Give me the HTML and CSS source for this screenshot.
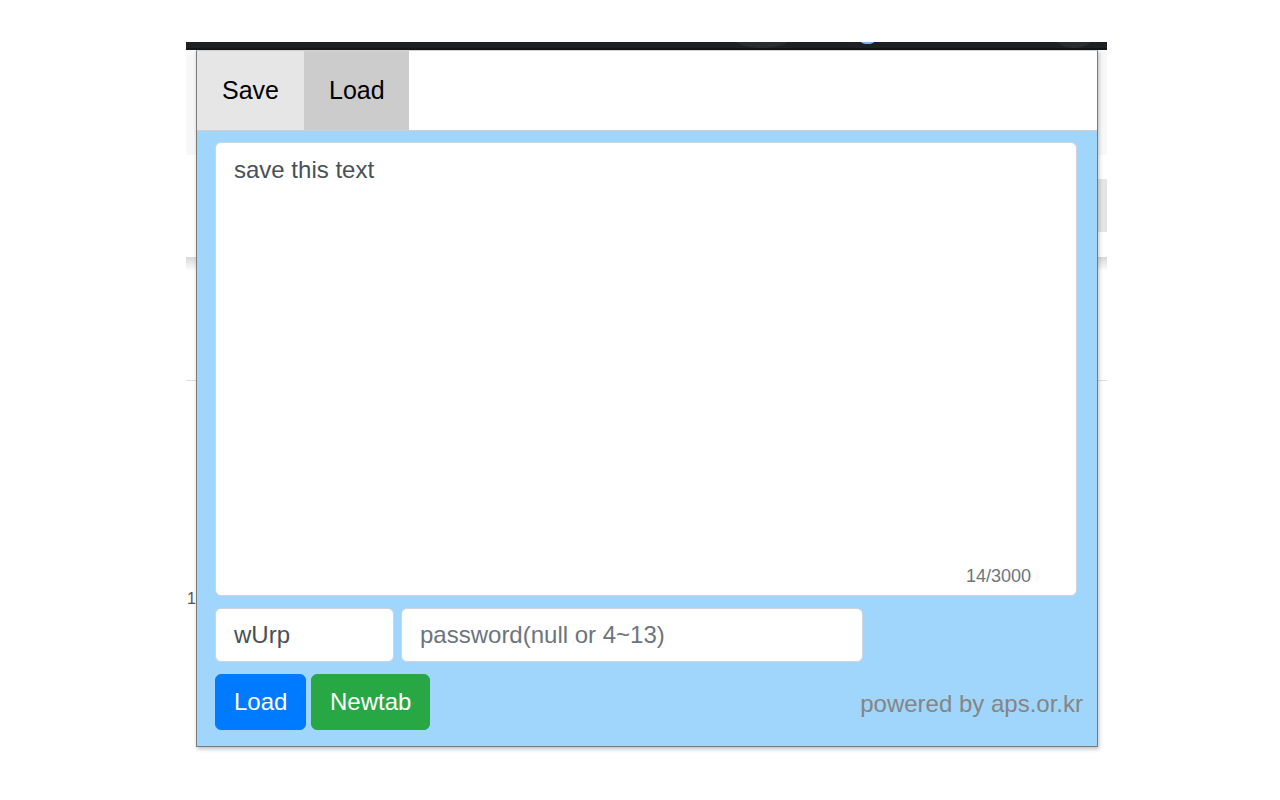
FILE: index.html
```html
<!DOCTYPE html>
<html lang="en">
<head>
<meta charset="utf-8">
<title>Save / Load</title>
<link rel="stylesheet" href="styles.css">
</head>
<body>
<div class="bg-window">
  <div class="bg-topbar">
    <span class="bg-arc bg-arc-a"></span>
    <span class="bg-dot"></span>
    <span class="bg-arc bg-arc-b"></span>
  </div>
  <div class="bg-header"></div>
  <div class="bg-toolbar">
    <span class="bg-toolbtn"></span>
  </div>
  <div class="bg-shadow"></div>
  <div class="bg-section"></div>
  <div class="bg-content"><span class="bg-num">1</span></div>
</div>

<div class="popup">
  <nav class="tabs">
    <div class="tab tab-save">Save</div>
    <div class="tab tab-load">Load</div>
  </nav>
  <main class="panel">
    <div class="editor">
      <textarea class="editor-text">save this text</textarea>
      <span class="counter">14/3000</span>
    </div>
    <div class="field-row">
      <input class="field field-key" type="text" value="wUrp">
      <input class="field field-pass" type="password" placeholder="password(null or 4~13)">
    </div>
    <div class="action-row">
      <div class="buttons">
        <button class="btn btn-load">Load</button>
        <button class="btn btn-newtab">Newtab</button>
      </div>
      <span class="powered">powered by aps.or.kr</span>
    </div>
  </main>
</div>
</body>
</html>
```

FILE: styles.css
```css
* {
  box-sizing: border-box;
}

html, body {
  margin: 0;
  padding: 0;
  background: #ffffff;
  font-family: "Liberation Sans", Arial, sans-serif;
}

body {
  width: 1280px;
  height: 800px;
  overflow: hidden;
  position: relative;
}

/* background browser window (free canvas) */
.bg-window {
  position: absolute;
  left: 186px;
  top: 42px;
  width: 921px;
  height: 760px;
  background: #ffffff;
  display: flex;
  flex-direction: column;
}

.bg-topbar {
  height: 8px;
  flex-shrink: 0;
  background: #1f2023;
  border-bottom: 2px solid #151618;
  position: relative;
  overflow: hidden;
}

.bg-arc {
  position: absolute;
  top: -14px;
  height: 20px;
  border-radius: 50%;
  background: #2b2c30;
}

.bg-arc-a {
  left: 548px;
  width: 56px;
}

.bg-arc-b {
  left: 870px;
  width: 36px;
}

.bg-dot {
  position: absolute;
  left: 674px;
  top: -3px;
  width: 15px;
  height: 5px;
  border-radius: 0 0 6px 6px;
  background: #7fb0f0;
}

.bg-header {
  height: 105px;
  flex-shrink: 0;
  background: #f7f8fa;
}

.bg-toolbar {
  height: 102px;
  flex-shrink: 0;
  padding-top: 24px;
  display: flex;
  justify-content: flex-end;
}

.bg-toolbtn {
  width: 14px;
  height: 53px;
  background: #e4e6e6;
  border-left: 3px solid #b8bcbf;
}

.bg-shadow {
  height: 14px;
  flex-shrink: 0;
  background: linear-gradient(#d8d8d8, #ffffff);
}

.bg-section {
  height: 110px;
  flex-shrink: 0;
  border-bottom: 1px solid #dedede;
}

.bg-content {
  padding-top: 209px;
}

.bg-num {
  font-size: 16px;
  color: #555;
  padding-left: 1px;
}

/* popup (overlays the browser window) */
.popup {
  position: absolute;
  left: 196px;
  top: 50px;
  width: 902px;
  height: 697px;
  background: #ffffff;
  border: 1px solid #7a7a7a;
  border-top-color: #cfcfcf;
  box-shadow: 1px 2px 4px rgba(0, 0, 0, 0.25);
  display: flex;
  flex-direction: column;
}

.tabs {
  display: flex;
  height: 80px;
  flex-shrink: 0;
  border-bottom: 1px solid #cfcfcf;
}

.tab {
  display: flex;
  align-items: center;
  padding: 0 25px;
  font-size: 25px;
  color: #000;
}

.tab-save {
  width: 107px;
  background: #e6e6e6;
}

.tab-load {
  width: 105px;
  background: #cccccc;
}

.panel {
  flex: 1;
  background: #a0d6fc;
  padding: 11px 14px 16px 18px;
  display: flex;
  flex-direction: column;
  gap: 12px;
}

.editor {
  position: relative;
  width: 862px;
  height: 454px;
  flex-shrink: 0;
}

.editor-text {
  display: block;
  width: 100%;
  height: 100%;
  margin: 0;
  resize: none;
  border: 1px solid #ced4da;
  border-radius: 6px;
  background: #ffffff;
  padding: 9px 18px;
  font-family: "Liberation Sans", Arial, sans-serif;
  font-size: 24px;
  line-height: 36px;
  color: #495057;
  outline: none;
}

.counter {
  position: absolute;
  right: 46px;
  bottom: 9px;
  font-size: 18px;
  color: #6c757d;
}

.field-row {
  display: flex;
  gap: 7px;
}

.field {
  height: 54px;
  margin: 0;
  border: 1px solid #ced4da;
  border-radius: 6px;
  background: #ffffff;
  padding: 0 18px;
  font-family: "Liberation Sans", Arial, sans-serif;
  font-size: 24px;
  color: #495057;
  outline: none;
}

.field::placeholder {
  color: #6c757d;
  opacity: 1;
}

.field-key {
  width: 179px;
}

.field-pass {
  width: 462px;
}

.action-row {
  display: flex;
  align-items: center;
  justify-content: space-between;
}

.buttons {
  display: flex;
  gap: 5px;
}

.btn {
  height: 56px;
  padding: 0 18px;
  border: 1px solid transparent;
  border-radius: 6px;
  font-family: "Liberation Sans", Arial, sans-serif;
  font-size: 24px;
  color: #ffffff;
  cursor: pointer;
}

.btn-load {
  width: 91px;
  background: #007bff;
  border-color: #007bff;
}

.btn-newtab {
  width: 119px;
  background: #28a745;
  border-color: #28a745;
}

.powered {
  font-size: 24px;
  color: #858585;
  padding-top: 4px;
}
```
